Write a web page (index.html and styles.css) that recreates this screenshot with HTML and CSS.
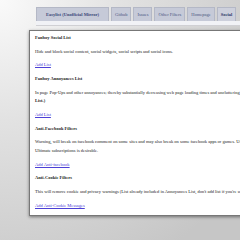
FILE: index.html
```html
<!DOCTYPE html>
<html lang="en">
  <head>
    <meta charset="UTF-8" />
    <title>Fanboy Social</title>
    <link rel="stylesheet" href="styles.css">
  </head>
  <body>
    <div class="nav">
      <div class="tabs">
        <a class="tab first" href="#">Easylist (Unofficial Mirror)</a>
        <a class="tab" href="#">Github</a>
        <a class="tab" href="#">Issues</a>
        <a class="tab" href="#">Other Filters</a>
        <a class="tab" href="#">Homepage</a>
        <a class="tab active" href="#">Social</a>
      </div>
      <div class="strip"></div>
    </div>
    <div class="content">
      <p class="title">Fanboy Social List</p>
      <p>Hide and block social content, social widgets, social scripts and social icons.</p>
      <p><a href="#">Add List</a></p>
      <p class="title">Fanboy Annoyances List</p>
      <p>In page Pop-Ups and other annoyances; thereby substantially decreasing web page loading times and uncluttering them. <b>(Includes Fanboy Social List.)</b></p>
      <p><a href="#">Add List</a></p>
      <p class="title">Anti-Facebook Filters</p>
      <p>Warning, will break on facebook comment on some sites and may also break on some facebook apps or games. Use of Fanboy Complete or Fanboy Ultimate subscriptions is desirable.</p>
      <p><a href="#">Add Anti-facebook</a></p>
      <p class="title">Anti-Cookie Filters</p>
      <p>This will remove cookie and privacy warnings (List already included in Annoyances List, don't add list if you're using it.)</p>
      <p><a href="#">Add Anti-Cookie Messages</a></p>
    </div>
  </body>
</html>
```

FILE: styles.css
```css
html,
body {
  margin: 0;
  height: 100%;
  overflow: hidden;
}
body {
  background: radial-gradient(circle at 0 0, #fafafa 0, #e2e2e2 120px, #c6c6c6 300px);
  font-family: "Liberation Serif", "Times New Roman", serif;
  font-size: 4.5px;
  color: #222;
}
.nav {
  margin-left: 36px;
  padding-top: 7px;
  width: 320px;
}
.tabs {
  display: flex;
  gap: 2px;
}
.tab {
  display: block;
  background: #c6cad8;
  color: #4a5580;
  text-decoration: none;
  padding: 0 3px;
  line-height: 13px;
  border: 1px solid #b4b8c6;
  border-bottom: none;
}
.tab.first {
  font-weight: bold;
  color: #3a4778;
  padding: 0 9px;
}
.tab.active {
  font-weight: bold;
  color: #2a3566;
  background: #cdd0dc;
}
.strip {
  height: 4px;
  background: #f1f2f6;
  border-bottom: 1px solid #d0d0d4;
}
.content {
  margin: 4px 0 0 29px;
  width: 269px;
  background: #fff;
  border: 1px solid #777;
  box-shadow: 0 1px 3px rgba(0, 0, 0, 0.45);
  padding: 3px 5px 0 5px;
}
.content p {
  margin: 0 0 5.2px 0;
  line-height: 8.5px;
}
.content .title {
  font-weight: bold;
}
.content a {
  color: #4b3fd6;
}
```
